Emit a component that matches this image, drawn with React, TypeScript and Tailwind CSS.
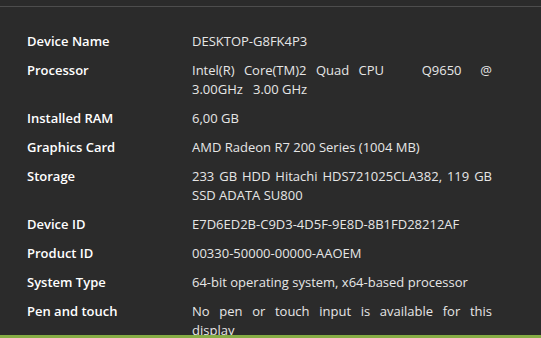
import React from "react";

const rows: [string, React.ReactNode][] = [
  ["Device Name", "DESKTOP-G8FK4P3"],
  ["Processor", "Intel(R)\u00a0 Core(TM)2\u00a0 Quad\u00a0 CPU\u00a0 \u00a0 \u00a0 \u00a0 Q9650\u00a0 \u00a0 @ 3.00GHz\u00a0 \u00a03.00 GHz"],
  ["Installed RAM", "6,00 GB"],
  ["Graphics Card", "AMD Radeon R7 200 Series (1004 MB)"],
  ["Storage", "233 GB HDD Hitachi HDS721025CLA382, 119 GB SSD ADATA SU800"],
  ["Device ID", "E7D6ED2B-C9D3-4D5F-9E8D-8B1FD28212AF"],
  ["Product ID", "00330-50000-00000-AAOEM"],
  ["System Type", "64-bit operating system, x64-based processor"],
  [
    "Pen and touch",
    <>
      <span className="block [text-align-last:justify]">No pen or touch input is available for this</span>
      <span className="block">display</span>
    </>,
  ],
];

export default function App() {
  return (
    <div
      className="w-[541px] h-[338px] overflow-hidden bg-[#2b2b2b] flex flex-col relative"
      style={{ fontFamily: '"Open Sans", "Noto Sans", sans-serif' }}
    >
      <div className="h-[6px] shrink-0" />
      <div className="h-px shrink-0 bg-[#4d4d4d]" />
      <div className="flex flex-col shrink-0 gap-[10px] pt-[25px] pl-[27px]">
        {rows.map(([k, v]) => (
          <div key={k} className="flex shrink-0 text-[13px] leading-[19px]">
            <div className="w-[165px] shrink-0 font-semibold text-white">{k}</div>
            <div className="w-[300px] shrink-0 text-[#e6e6e6] text-justify">{v}</div>
          </div>
        ))}
      </div>
      <div className="absolute left-0 right-0 bottom-0 h-[3px] bg-[#86ad45]" />
    </div>
  );
}
